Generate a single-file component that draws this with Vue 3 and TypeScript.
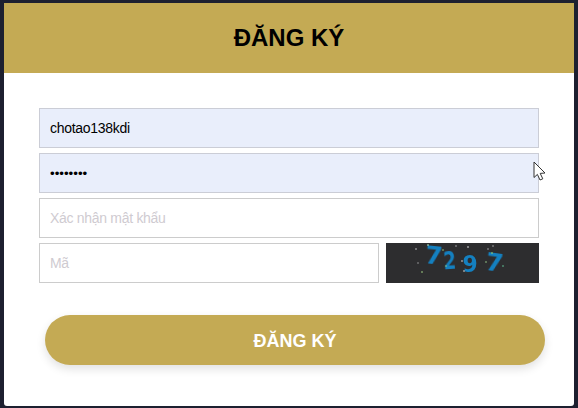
<script setup lang="ts">
const digits = [
  { ch: '7', cls: 'd1' },
  { ch: '2', cls: 'd2' },
  { ch: '9', cls: 'd3' },
  { ch: '7', cls: 'd4' },
]
const specks = [
  [29, 5, '#ccc'], [41, 1, '#cfc'], [56, 6, '#9c7'], [69, 2, '#aaa'], [81, 3, '#eee'], [101, 5, '#aaa'],
  [106, 2, '#aaa'], [105, 9, '#ad6'], [31, 19, '#999'], [35, 28, '#ad8'], [75, 17, '#ddd'], [77, 27, '#ddd'],
  [99, 18, '#9c8'], [116, 22, '#6c9'], [59, 22, '#9c7'],
]
</script>

<template>
  <div class="card">
    <header class="head">
      <h1 class="title">ĐĂNG KÝ</h1>
    </header>
    <form class="form" @submit.prevent>
      <div class="fields">
        <input class="field filled" type="text" value="chotao138kdi" />
        <input class="field filled pass" type="password" value="12345678" />
        <input class="field" type="text" placeholder="Xác nhận mật khẩu" />
        <div class="row">
          <input class="field code" type="text" placeholder="Mã" />
          <div class="captcha">
            <span v-for="(d, i) in digits" :key="i" class="digit" :class="d.cls">{{ d.ch }}</span>
            <i
              v-for="(s, i) in specks"
              :key="'s' + i"
              class="speck"
              :style="{ left: s[0] + 'px', top: s[1] + 'px', background: String(s[2]) }"
            ></i>
          </div>
        </div>
      </div>
      <button class="submit" type="submit">ĐĂNG KÝ</button>
    </form>
    <svg class="cursor" width="14" height="21" viewBox="0 0 14 21">
      <path
        d="M1 1 L1 16.5 L4.4 13.4 L7 19 L9.8 17.8 L7.2 12.4 L12 12 Z"
        fill="#fff"
        stroke="#333"
        stroke-width="1"
        stroke-linejoin="round"
      />
    </svg>
  </div>
</template>

<style>
html, body {
  margin: 0;
  background: #1d2030;
}
</style>

<style scoped>
.card {
  position: relative;
  box-sizing: border-box;
  width: 570px;
  height: 403px;
  margin: 3px 4px 2px;
  background: #fff;
  border-radius: 0 0 3px 3px;
  font-family: "Liberation Sans", Arial, sans-serif;
}
.head {
  height: 70px;
  background: #c4aa54;
  display: flex;
  align-items: center;
  justify-content: center;
}
.title {
  margin: 0;
  font-size: 24px;
  font-weight: 700;
  color: #000;
}
.form {
  padding: 35px 35px 0;
}
.fields {
  display: flex;
  flex-direction: column;
  gap: 5px;
}
.field {
  box-sizing: border-box;
  display: block;
  width: 100%;
  height: 40px;
  padding: 0 10px;
  border: 1px solid #ccc;
  border-radius: 0;
  outline: none;
  background: #fff;
  color: #000;
  font-family: "Liberation Sans", Arial, sans-serif;
  font-size: 14px;
  letter-spacing: -0.3px;
}
.field::placeholder {
  color: #cfcbd1;
  opacity: 1;
}
.filled {
  background: #e9eefb;
  border-color: #cbcdd6;
}
.pass {
  font-size: 13.3px;
  letter-spacing: 0;
}
.row {
  display: flex;
  gap: 7px;
}
.code {
  flex: 0 0 340px;
  width: 340px;
}
.captcha {
  position: relative;
  flex: 1;
  height: 40px;
  background: #2d2d2f;
}
.digit {
  position: absolute;
  font-family: "DejaVu Sans", sans-serif;
  font-weight: 700;
  line-height: 26px;
  color: #1480c0;
  filter: blur(0.5px);
}
.d1 { left: 39px; top: 0; font-size: 25px; transform: rotate(6deg); }
.d2 { left: 55px; top: 5px; font-size: 25px; transform: rotate(-4deg) scaleX(0.72); }
.d3 { left: 76px; top: 8px; font-size: 23px; transform: scaleX(0.95); }
.d4 { left: 100px; top: 7px; font-size: 24px; transform: rotate(8deg) scaleX(1.05); }
.speck {
  position: absolute;
  width: 2px;
  height: 2px;
  border-radius: 50%;
  opacity: 0.6;
}
.submit {
  display: block;
  box-sizing: border-box;
  width: 500px;
  height: 50px;
  margin: 32px 0 0 6px;
  padding: 2px 0 0;
  border: none;
  border-radius: 25px;
  background: #c4aa54;
  color: #fff;
  font-family: "Liberation Sans", Arial, sans-serif;
  font-size: 18px;
  font-weight: 700;
  box-shadow: 0 4px 10px rgba(0, 0, 0, 0.12);
}
.cursor {
  position: absolute;
  left: 529px;
  top: 158px;
}
</style>
